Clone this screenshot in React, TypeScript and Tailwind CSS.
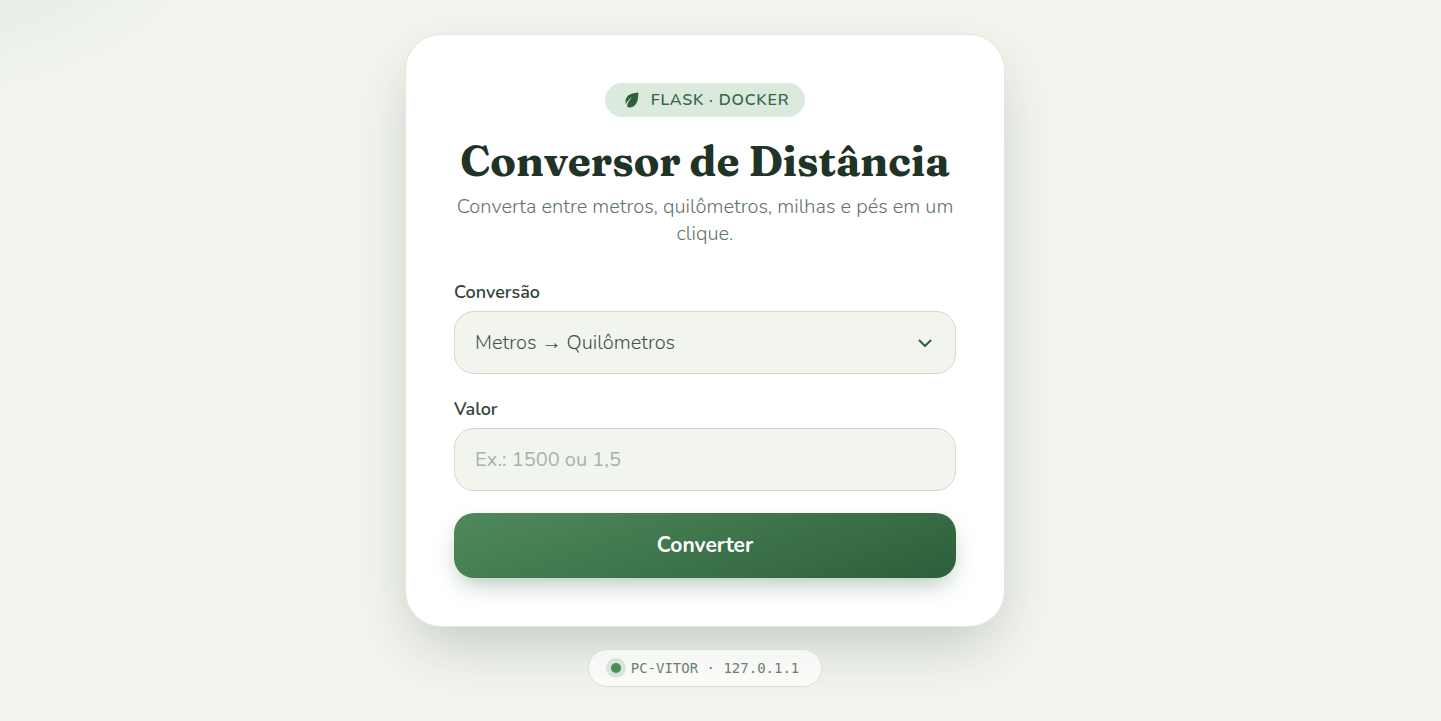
import { useState } from "react";

const conversions = [
  "Metros → Quilômetros",
  "Quilômetros → Metros",
  "Metros → Milhas",
  "Milhas → Metros",
  "Metros → Pés",
  "Pés → Metros",
];

const labelClass =
  "block text-[18px] leading-[26px] font-semibold text-[#2f4437] mb-1.5";
const fieldClass =
  "block w-full h-[63px] rounded-[20px] border border-[#cddbd0] bg-[#f2f5ee] px-5 text-[20px] text-[#3f5447] outline-none focus:border-[#4f8a5b] placeholder:text-[#a3b5a8] placeholder:opacity-100";

function LeafIcon() {
  return (
    <svg viewBox="0 0 14 16" className="h-4 w-3.5" aria-hidden="true">
      <path
        d="M13.3 0.6C9 0.9 4.3 2 2 5C0.4 7.1 0.2 10 0.9 12.2C2.2 9 4.2 6.8 7.2 5.2C4.4 7.8 2.8 10.4 2 14.2C3.4 16 7 16.1 9.6 13.6C13.2 10.2 13.2 5.4 13.3 0.6Z"
        fill="#2d5f3a"
      />
    </svg>
  );
}

export default function App() {
  const [conversion, setConversion] = useState(conversions[0]);
  const [value, setValue] = useState("");

  return (
    <div className="min-h-screen bg-[#f2f5ee] bg-[radial-gradient(ellipse_351px_214px_at_-100px_-100px,#dae6df,#f2f5ee)] pt-[34px] pr-[31px] pb-8 font-['Nunito','Open_Sans',sans-serif]">
      <main className="mx-auto flex w-full max-w-[600px] flex-col items-center">
        <section className="w-full rounded-[36px] border border-[#e0e9e1] bg-white p-12 shadow-[0_24px_60px_-12px_rgba(31,51,38,0.25)]">
          <header className="flex flex-col items-center text-center">
            <span className="flex h-[34px] items-center gap-3 rounded-full bg-[#dceade] pr-4 pl-5 text-[16px] font-semibold tracking-wider text-[#37693f]">
              <LeafIcon />
              FLASK · DOCKER
            </span>
            <h1 className="mt-[18px] font-['Fraunces','Liberation_Serif',serif] text-[42px] leading-[52px] font-bold whitespace-nowrap text-[#1f3326]">
              Conversor de Distância
            </h1>
            <p className="mt-1.5 text-[20px] leading-[27px] font-light text-[#5f7566]">
              Converta entre metros, quilômetros, milhas e pés em um clique.
            </p>
          </header>

          <form
            className="mt-8 flex flex-col gap-[22px]"
            onSubmit={(event) => event.preventDefault()}
          >
            <div>
              <label htmlFor="conversion" className={labelClass}>
                Conversão
              </label>
              <div className="relative">
                <select
                  id="conversion"
                  value={conversion}
                  onChange={(event) => setConversion(event.target.value)}
                  className={`${fieldClass} appearance-none font-light`}
                >
                  {conversions.map((option) => (
                    <option key={option}>{option}</option>
                  ))}
                </select>
                <svg
                  viewBox="0 0 16 16"
                  className="pointer-events-none absolute top-6 right-[23px] size-4"
                  fill="none"
                  stroke="#2d5f3a"
                  strokeWidth="2"
                  strokeLinecap="round"
                  strokeLinejoin="round"
                  aria-hidden="true"
                >
                  <path d="M2.5 5.5L8 11L13.5 5.5" />
                </svg>
              </div>
            </div>

            <div>
              <label htmlFor="amount" className={labelClass}>
                Valor
              </label>
              <input
                id="amount"
                type="text"
                inputMode="decimal"
                placeholder="Ex.: 1500 ou 1,5"
                value={value}
                onChange={(event) => setValue(event.target.value)}
                className={fieldClass}
              />
            </div>

            <button
              type="submit"
              className="h-[65px] w-full rounded-[20px] bg-[linear-gradient(160deg,#4f8a5b,#2d5f3a)] text-[21px] font-bold text-white shadow-[0_10px_24px_-6px_rgba(45,95,58,0.4)]"
            >
              Converter
            </button>
          </form>
        </section>

        <footer className="mt-[22px] flex h-[38px] items-center gap-2.5 rounded-full border border-[#d9e2da] bg-white/70 px-[22px] font-['DejaVu_Sans_Mono',monospace] text-[14px] text-[#6b7f71]">
          <span className="size-2.5 rounded-full bg-[#4f8a5b] ring-5 ring-[#d8e5da]" />
          PC-VITOR · 127.0.1.1
        </footer>
      </main>
    </div>
  );
}
